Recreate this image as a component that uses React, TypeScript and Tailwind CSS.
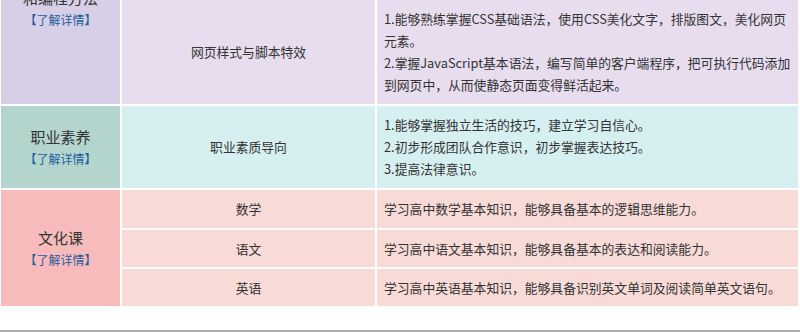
import React from "react";

type Sub = { name: string; lines: string[] };

type Group = {
  title: string;
  leftBg: string;
  cellBg: string;
  subs: Sub[];
  rows: string;
  clipped?: boolean;
};

const groups: Group[] = [
  {
    title: "和编程方法",
    leftBg: "bg-[#d6cfe5]",
    cellBg: "bg-[#e7ddef]",
    rows: "grid-rows-[104px]",
    clipped: true,
    subs: [
      {
        name: "网页样式与脚本特效",
        lines: [
          "1.能够熟练掌握CSS基础语法，使用CSS美化文字，排版图文，美化网页元素。",
          "2.掌握JavaScript基本语法，编写简单的客户端程序，把可执行代码添加到网页中，从而使静态页面变得鲜活起来。",
        ],
      },
    ],
  },
  {
    title: "职业素养",
    leftBg: "bg-[#b3d5cd]",
    cellBg: "bg-[#d6eff0]",
    rows: "grid-rows-[82px]",
    subs: [
      {
        name: "职业素质导向",
        lines: [
          "1.能够掌握独立生活的技巧，建立学习自信心。",
          "2.初步形成团队合作意识，初步掌握表达技巧。",
          "3.提高法律意识。",
        ],
      },
    ],
  },
  {
    title: "文化课",
    leftBg: "bg-[#f7bbbb]",
    cellBg: "bg-[#f8dbd7]",
    rows: "grid-rows-[38px_37px_37px]",
    subs: [
      { name: "数学", lines: ["学习高中数学基本知识，能够具备基本的逻辑思维能力。"] },
      { name: "语文", lines: ["学习高中语文基本知识，能够具备基本的表达和阅读能力。"] },
      { name: "英语", lines: ["学习高中英语基本知识，能够具备识别英文单词及阅读简单英文语句。"] },
    ],
  },
];

function LeftCell({ group }: { group: Group }) {
  return (
    <div
      className={`${group.leftBg} row-span-full flex flex-col items-center ${
        group.clipped ? "justify-start" : "justify-center"
      }`}
    >
      <div className={`text-[15px] leading-[22px] text-[#333] ${group.clipped ? "-mt-[13px]" : ""}`}>
        {group.title}
      </div>
      <a className="mt-[2px] text-[12px] leading-[18px] text-[#1f5c9e]">【了解详情】</a>
    </div>
  );
}

export default function App() {
  return (
    <div className="h-[332px] w-[800px] overflow-hidden bg-white font-['Noto_Sans_CJK_SC',sans-serif]">
      <div className="flex h-[330px] flex-col gap-[2px] pl-[1px] pr-[2px]">
        {groups.map((group) => (
          <div
            key={group.title}
            className={`grid grid-cols-[119px_253px_1fr] gap-[2px] ${group.rows}`}
          >
            <LeftCell group={group} />
            {group.subs.map((sub) => (
              <React.Fragment key={sub.name}>
                <div
                  className={`${group.cellBg} col-start-2 flex items-center justify-center text-[12.8px] text-[#333]`}
                >
                  {sub.name}
                </div>
                <div
                  className={`${group.cellBg} col-start-3 flex flex-col justify-center pl-[7px] pr-[4px] text-[12.8px] leading-[22px] text-[#333]`}
                >
                  {sub.lines.map((line) => (
                    <p key={line}>{line}</p>
                  ))}
                </div>
              </React.Fragment>
            ))}
          </div>
        ))}
      </div>
      <div className="h-[2px] bg-[#a9a9ab]" />
    </div>
  );
}
